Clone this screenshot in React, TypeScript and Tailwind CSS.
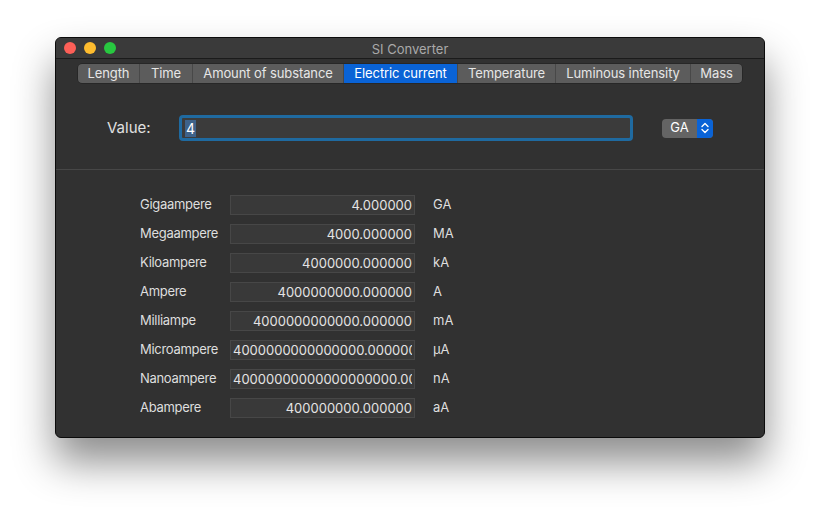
import React from "react";

const tabs = [
  { name: "Length", w: "w-[61px]" },
  { name: "Time", w: "w-[53px]" },
  { name: "Amount of substance", w: "w-[151px]" },
  { name: "Electric current", w: "w-[114px]" },
  { name: "Temperature", w: "w-[98px]" },
  { name: "Luminous intensity", w: "w-[135px]" },
  { name: "Mass", w: "w-[52px]" },
];

const rows = [
  { label: "Gigaampere", value: "4.000000", unit: "GA" },
  { label: "Megaampere", value: "4000.000000", unit: "MA" },
  { label: "Kiloampere", value: "4000000.000000", unit: "kA" },
  { label: "Ampere", value: "4000000000.000000", unit: "A" },
  { label: "Milliampe", value: "4000000000000.000000", unit: "mA" },
  { label: "Microampere", value: "4000000000000000.000000", unit: "µA" },
  { label: "Nanoampere", value: "40000000000000000000.000000", unit: "nA" },
  { label: "Abampere", value: "400000000.000000", unit: "aA" },
];

function Stepper() {
  return (
    <svg width="10" height="14" viewBox="0 0 10 14" fill="none">
      <path d="M2 5.5 L5 2.5 L8 5.5" stroke="white" strokeWidth="1.4" strokeLinecap="round" strokeLinejoin="round" />
      <path d="M2 8.5 L5 11.5 L8 8.5" stroke="white" strokeWidth="1.4" strokeLinecap="round" strokeLinejoin="round" />
    </svg>
  );
}

export default function App() {
  return (
    <div
      className="h-[512px] w-[820px] bg-white pl-[55px] pt-[37px]"
      style={{ fontFamily: "Inter, 'Noto Sans', sans-serif" }}
    >
      <div className="flex h-[401px] w-[710px] flex-col overflow-hidden rounded-[6px] border border-[#0b0b0b] bg-[#313131] shadow-[0_24px_40px_rgba(0,0,0,0.45)]">
        {/* title bar */}
        <div className="relative flex h-[21px] shrink-0 items-center justify-center border-b border-[#1b1b1b] bg-[#3a3a3a] pt-[3px]">
          <div className="absolute left-[8px] top-[4px] flex gap-[8px]">
            <span className="h-[12px] w-[12px] rounded-full bg-[#fd5f57]" />
            <span className="h-[12px] w-[12px] rounded-full bg-[#febc2e]" />
            <span className="h-[12px] w-[12px] rounded-full bg-[#28c840]" />
          </div>
          <span className="text-[13px] text-[#a9a9a9]">SI Converter</span>
        </div>

        {/* tabs */}
        <div className="mt-[5px] flex justify-center">
          <div className="flex h-[19px] overflow-hidden rounded-[4px] bg-[#5c5c5c] shadow-[0_0_0_0.5px_rgba(0,0,0,0.4)]">
            {tabs.map((t, i) => (
              <div
                key={t.name}
                className={
                  "flex items-center justify-center text-[13px] leading-none tracking-[-0.1px] " +
                  t.w +
                  (t.name === "Electric current"
                    ? " bg-[#0a63d6] text-white"
                    : " text-[#e6e6e6]") +
                  (i > 0 ? " border-l border-[#484848]" : "")
                }
              >
                {t.name}
              </div>
            ))}
          </div>
        </div>

        {/* value row */}
        <div className="mt-[32px] flex items-center pl-[51px]">
          <span className="w-[72px] text-[15px] text-[#e0e0e0]">Value:</span>
          <div className="flex h-[26px] w-[454px] items-center rounded-[4px] border-[3px] border-[#1f6aa0] bg-[#3b3b3b] pl-[3px]">
            <span className="bg-[#3e6289] px-[1px] text-[14px] leading-[17px] text-white">4</span>
          </div>
          <div className="ml-[29px] flex h-[19px] w-[51px] overflow-hidden rounded-[4px] bg-[#646464]">
            <div className="flex flex-1 items-center justify-center text-[13px] text-white">GA</div>
            <div className="flex w-[16px] items-center justify-center bg-[#0a63d6]">
              <Stepper />
            </div>
          </div>
        </div>

        <div className="mt-[28px] h-px bg-[#474747]" />

        {/* results */}
        <div className="flex flex-col gap-[9px] pl-[84px] pt-[25px]">
          {rows.map((r) => (
            <div key={r.label} className="flex h-[20px] items-center">
              <span className="w-[90px] overflow-hidden whitespace-nowrap pr-[4px] text-[13px] tracking-[-0.3px] text-[#dedede]">
                {r.label}
              </span>
              <div className="h-[20px] w-[185px] border border-[#474747] bg-[#393939] px-[2px]">
                <div className="overflow-hidden whitespace-nowrap text-right text-[13px] leading-[18px] text-[#e4e4e4]">
                  {r.value}
                </div>
              </div>
              <span className="ml-[18px] text-[13px] text-[#dedede]">{r.unit}</span>
            </div>
          ))}
        </div>
      </div>
    </div>
  );
}
